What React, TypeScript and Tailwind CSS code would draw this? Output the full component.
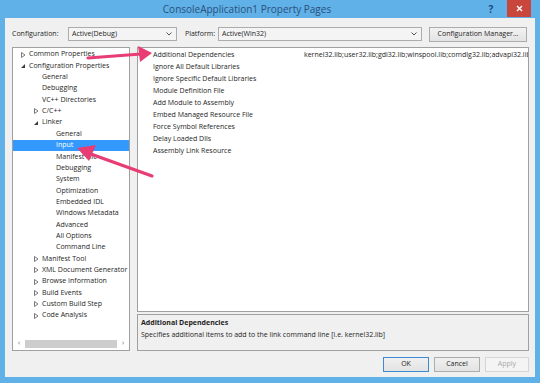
import React from 'react';

const FONT = "font-['Open_Sans','Noto_Sans',sans-serif]";

type Node = { label: string; level: number; mark?: 'open' | 'closed'; selected?: boolean };

const TREE: Node[] = [
  { label: 'Common Properties', level: 0, mark: 'closed' },
  { label: 'Configuration Properties', level: 0, mark: 'open' },
  { label: 'General', level: 1 },
  { label: 'Debugging', level: 1 },
  { label: 'VC++ Directories', level: 1 },
  { label: 'C/C++', level: 1, mark: 'closed' },
  { label: 'Linker', level: 1, mark: 'open' },
  { label: 'General', level: 2 },
  { label: 'Input', level: 2, selected: true },
  { label: 'Manifest File', level: 2 },
  { label: 'Debugging', level: 2 },
  { label: 'System', level: 2 },
  { label: 'Optimization', level: 2 },
  { label: 'Embedded IDL', level: 2 },
  { label: 'Windows Metadata', level: 2 },
  { label: 'Advanced', level: 2 },
  { label: 'All Options', level: 2 },
  { label: 'Command Line', level: 2 },
  { label: 'Manifest Tool', level: 1, mark: 'closed' },
  { label: 'XML Document Generator', level: 1, mark: 'closed' },
  { label: 'Browse Information', level: 1, mark: 'closed' },
  { label: 'Build Events', level: 1, mark: 'closed' },
  { label: 'Custom Build Step', level: 1, mark: 'closed' },
  { label: 'Code Analysis', level: 1, mark: 'closed' },
];

const PROPS: [string, string][] = [
  ['Additional Dependencies', 'kernel32.lib;user32.lib;gdi32.lib;winspool.lib;comdlg32.lib;advapi32.lib'],
  ['Ignore All Default Libraries', ''],
  ['Ignore Specific Default Libraries', ''],
  ['Module Definition File', ''],
  ['Add Module to Assembly', ''],
  ['Embed Managed Resource File', ''],
  ['Force Symbol References', ''],
  ['Delay Loaded Dlls', ''],
  ['Assembly Link Resource', ''],
];

const INDENT = ['pl-[6px]', 'pl-[19px]', 'pl-[31px]'];

function Mark({ kind }: { kind: 'open' | 'closed' }) {
  if (kind === 'open')
    return (
      <svg width="8" height="8" viewBox="0 0 8 8" className="shrink-0">
        <polygon points="6,2 6,6 2,6" fill="#3c3c3c" />
      </svg>
    );
  return (
    <svg width="8" height="8" viewBox="0 0 8 8" className="shrink-0">
      <polygon points="2.5,1.5 6,4 2.5,6.5" fill="none" stroke="#6a6a6a" strokeWidth="0.9" />
    </svg>
  );
}

function Combo({ value, w }: { value: string; w: string }) {
  return (
    <div className={`${w} h-[14px] flex items-center justify-between bg-[#f4f4f4] border border-[#acacac] pl-[3px] pr-[4px]`}>
      <span>{value}</span>
      <svg width="6" height="4" viewBox="0 0 6 4">
        <polyline points="0.5,0.5 3,3 5.5,0.5" fill="none" stroke="#555" strokeWidth="1" />
      </svg>
    </div>
  );
}

export default function App() {
  return (
    <div className={`relative w-[540px] h-[383px] bg-[#5fb1e7] flex flex-col overflow-hidden ${FONT} text-[7px] text-[#1e1e1e]`}>
      {/* title bar */}
      <div className="h-[18px] flex items-center relative shrink-0">
        <div className="flex-1 text-center text-[10px] text-[#2c4f7c] pl-[10px]">ConsoleApplication1 Property Pages</div>
        <div className="w-[14px] text-[10px] font-bold text-[#1e4a86] text-center">?</div>
        <div className="ml-[9px] mr-[9px] self-start w-[24px] h-[17px] bg-[#c9463d] flex items-center justify-center">
          <svg width="7" height="7" viewBox="0 0 7 7">
            <path d="M1 1 L6 6 M6 1 L1 6" stroke="white" strokeWidth="1.4" />
          </svg>
        </div>
      </div>

      {/* client area */}
      <div className="flex-1 mx-[5px] mb-[6px] bg-[#f0f0f0] flex flex-col pl-[7px] pr-[6px] pt-[9px] pb-[5px]">
        <div className="h-[14px] flex items-center shrink-0">
          <span className="w-[56px]">Configuration:</span>
          <Combo value="Active(Debug)" w="w-[109px]" />
          <span className="w-[37px] pl-[4px] ml-[4px]">Platform:</span>
          <Combo value="Active(Win32)" w="w-[204px]" />
          <div className="ml-[7px] w-[98px] h-[15px] flex items-center justify-center bg-gradient-to-b from-[#f2f2f2] to-[#e3e3e3] border border-[#acacac]">
            Configuration Manager...
          </div>
        </div>

        <div className="flex mt-[6px] h-[304px] shrink-0 gap-[7px]">
          {/* tree */}
          <div className="w-[118px] bg-white border border-[#a0a0a0] flex flex-col">
            <div className="pt-[1px]">
              {TREE.map((n, i) => (
                <div
                  key={i}
                  className={`h-[11.35px] flex items-center whitespace-nowrap ${INDENT[n.level]} ${n.selected ? 'bg-[#3399ff] text-white' : ''}`}
                >
                  <span className="w-[10px] flex items-center">{n.mark && <Mark kind={n.mark} />}</span>
                  <span className={n.level === 2 ? 'pl-[2px]' : ''}>{n.label}</span>
                </div>
              ))}
            </div>
            <div className="flex-1" />
            <div className="h-[11px] mb-[1px] flex items-center px-[2px] text-[#606060]">
              <span className="w-[8px] text-center text-[7px]">‹</span>
              <div className="flex-1 h-[8px] bg-[#cdcdcd] mx-[2px]" />
              <span className="w-[8px] text-center text-[7px]">›</span>
            </div>
          </div>

          {/* property grid + description */}
          <div className="flex-1 min-w-0 flex flex-col gap-[2px]">
            <div className="h-[265px] bg-white border border-[#a0a0a0] pt-[1px] overflow-hidden">
              {PROPS.map(([k, v]) => (
                <div key={k} className="h-[12px] flex items-center whitespace-nowrap">
                  <span className="w-[166px] pl-[15px] shrink-0">{k}</span>
                  <span className="flex-1 min-w-0 overflow-hidden">{v}</span>
                </div>
              ))}
            </div>
            <div className="flex-1 bg-[#f0f0f0] border border-[#a0a0a0] px-[3px] pt-[2px] leading-[12px]">
              <div className="font-bold">Additional Dependencies</div>
              <div>Specifies additional items to add to the link command line [i.e. kernel32.lib]</div>
            </div>
          </div>
        </div>

        <div className="flex-1" />
        <div className="flex justify-end gap-[5px] h-[15px]">
          <div className="w-[46px] flex items-center justify-center bg-gradient-to-b from-[#f0f0f0] to-[#e3e3e3] border border-[#3c8ad1]">OK</div>
          <div className="w-[46px] flex items-center justify-center bg-gradient-to-b from-[#f0f0f0] to-[#e3e3e3] border border-[#acacac]">Cancel</div>
          <div className="w-[44px] flex items-center justify-center bg-[#f4f4f4] border border-[#d5d5d5] text-[#a8a8a8]">Apply</div>
        </div>
      </div>

      {/* annotation arrows */}
      <svg className="absolute left-0 top-0 pointer-events-none" width="540" height="383" viewBox="0 0 540 383">
        <path d="M88 58 L141 54" stroke="#e83c74" strokeWidth="3.2" strokeLinecap="round" />
        <polygon points="152,53 138,46 140,62" fill="#e83c74" />
        <path d="M152 176 L88 153" stroke="#e83c74" strokeWidth="3.2" strokeLinecap="round" />
        <polygon points="77,148 96,145 89,161" fill="#e83c74" />
      </svg>
    </div>
  );
}
